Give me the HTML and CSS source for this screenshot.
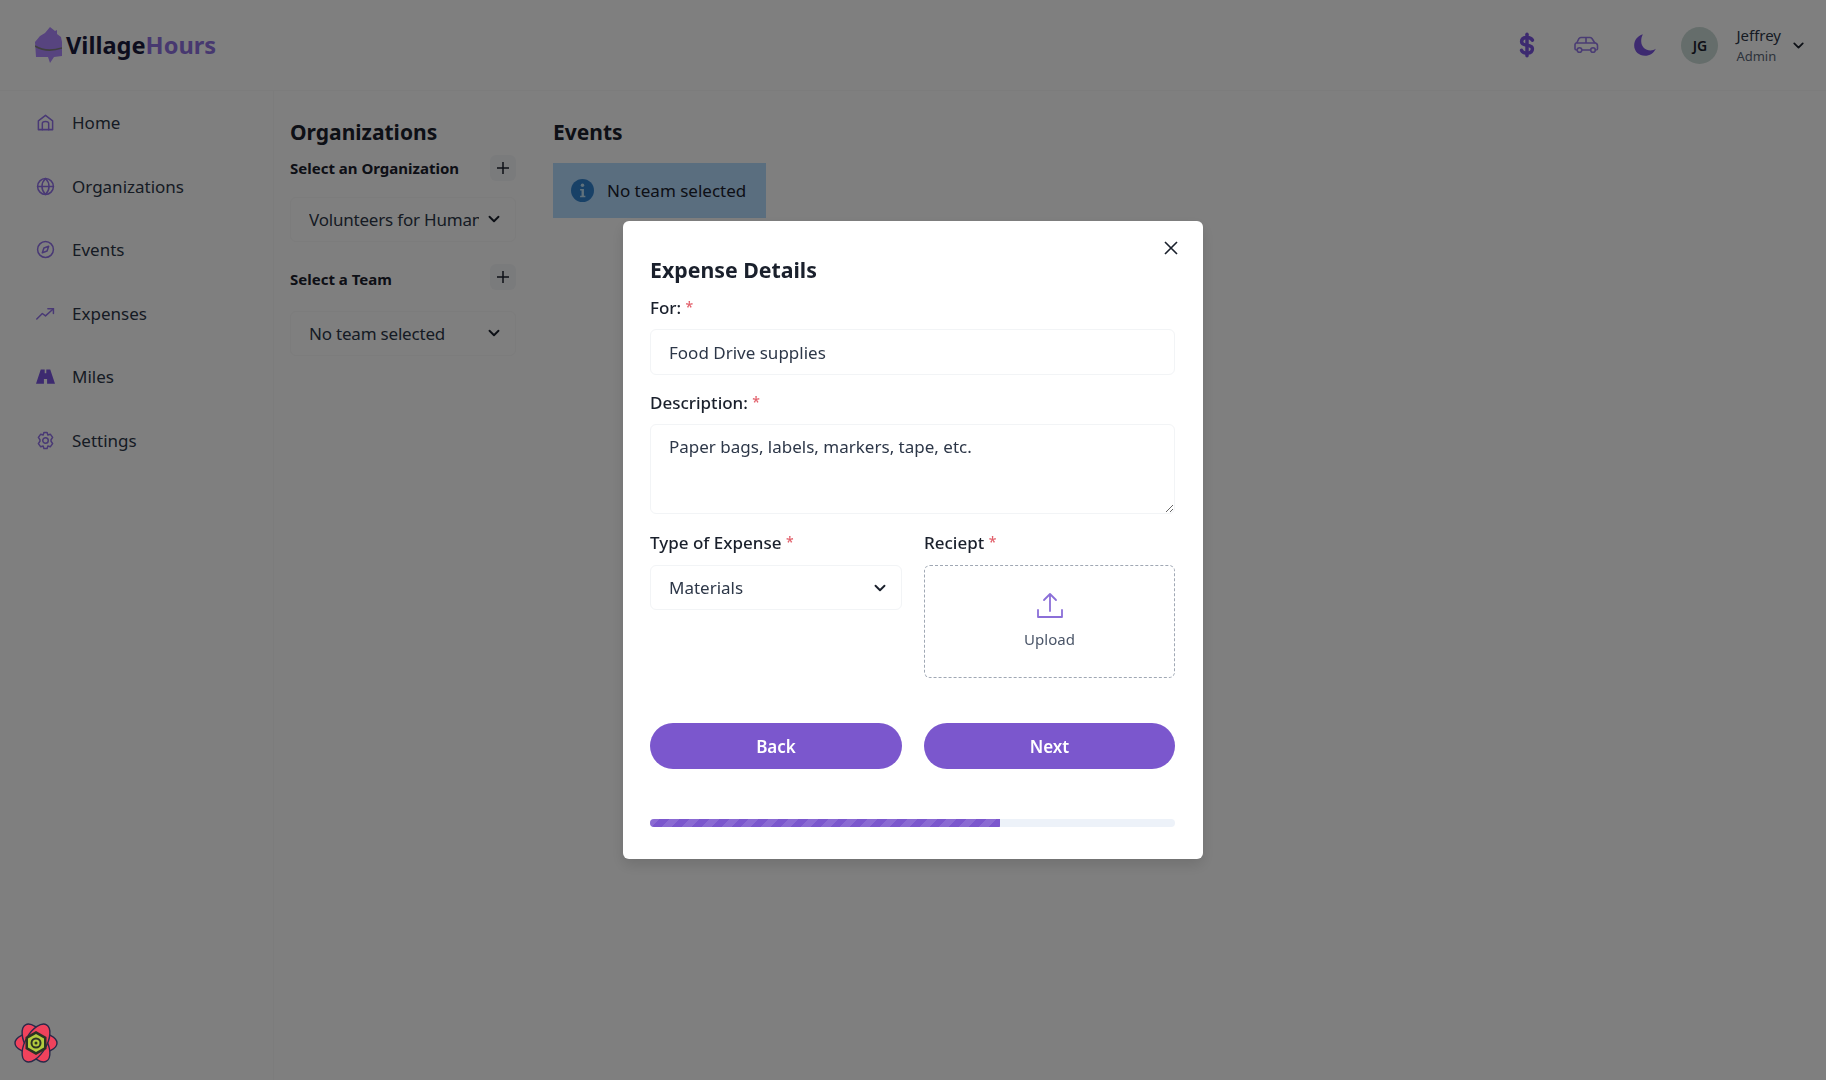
FILE: index.html
```html
<!DOCTYPE html>
<html lang="en">
<head>
    <meta charset="UTF-8">
    <meta name="viewport" content="width=device-width, initial-scale=1.0">
    <title>VillageHours</title>
    <link rel="stylesheet" href="styles.css">
</head>
<body>

    <header class="topbar">
        <div class="brand">
            <svg class="brand-mark" viewBox="0 0 27 36">
                <path d="M0 15 L5 9 L10 6 L15 0 L20 4 L22 3 L22 7 L26 10 L27 15 L27 29 L19 30 L15 36 L13 30 L1 30 Z" fill="#ae88ff"/>
                <path d="M0 19 C8 24 18 24 27 21" fill="none" stroke="#808080" stroke-width="1.600"/>
            </svg>
            <span class="brand-name">Village<span class="brand-accent">Hours</span></span>
        </div>
        <div class="topbar-right">
            <svg class="top-icon" viewBox="0 0 24 24" fill="none" stroke="#7a55e0" stroke-width="3.200" stroke-linecap="round">
                <path d="M17 7.500C16 5.500 14 5 12 5C9 5 7 6.500 7 9C7 14 17 10.500 17 15.500C17 18 15 19.500 12 19.500C10 19.500 8 19 7 17"/>
                <path d="M12 2V22"/>
            </svg>
            <svg class="top-icon" viewBox="0 0 26 24" fill="none" stroke="#9478e8" stroke-width="1.600">
                <path d="M2 16V11.500C2 10.500 3 10 4 9.500L6 5.500C6.500 5 7 4.500 8 4.500H17C18 4.500 18.500 5 19 5.500L21.500 9.500C23 10 24.500 11 24.500 12.500V16C24.500 17 24 17 22.500 17M17.500 17H9M4 17C3 17 2 17 2 16"/>
                <path d="M4 10H22M13 5V10"/>
                <circle cx="6.500" cy="17" r="2.300"/>
                <circle cx="20" cy="17" r="2.300"/>
            </svg>
            <svg class="top-icon top-icon-last" viewBox="0 0 24 24">
                <path d="M10 2C5 3.500 2 7.500 2 12.500C2 18 6.500 22 12 22C16.500 22 20 19.500 22 15.500C20.500 16.500 19 17 17 17C12.500 17 8.500 13.500 8.500 8.500C8.500 6 9 4 10 2Z" fill="#7a55e0"/>
            </svg>
            <div class="avatar">JG</div>
            <div class="user">
                <div class="user-name">Jeffrey</div>
                <div class="user-role">Admin</div>
            </div>
            <svg class="chevron user-chevron" viewBox="0 0 24 24"><path d="M6 9l6 6 6-6"/></svg>
        </div>
    </header>

    <div class="layout">
        <nav class="sidebar">
            <a class="nav-item">
                <svg class="nav-icon" viewBox="0 0 24 24"><path d="M3 21V10L12 3L21 10V21Z"/><path d="M8 21V13C8 10 16 10 16 13V21"/></svg>
                Home
            </a>
            <a class="nav-item">
                <svg class="nav-icon" viewBox="0 0 24 24"><circle cx="12" cy="12" r="10"/><path d="M2 12H22M12 2C6 8 6 16 12 22M12 2C18 8 18 16 12 22"/></svg>
                Organizations
            </a>
            <a class="nav-item">
                <svg class="nav-icon" viewBox="0 0 24 24"><circle cx="12" cy="12" r="10"/><path d="M16 8L14 14L8 16L10 10Z"/></svg>
                Events
            </a>
            <a class="nav-item">
                <svg class="nav-icon" viewBox="0 0 24 24"><path d="M1 19L8 12L12 15L22 6"/><path d="M15 6H22V12"/></svg>
                Expenses
            </a>
            <a class="nav-item">
                <svg class="nav-icon" viewBox="0 0 24 24"><path class="nav-fill" d="M6 3H11V8H13V3H18L24 21H14V15H10V21H0Z"/></svg>
                Miles
            </a>
            <a class="nav-item">
                <svg class="nav-icon" viewBox="0 0 24 24"><circle cx="12" cy="12" r="3.500"/><path d="M10 2H14L15 5L18 4L21 8L19 11V13L21 16L18 20L15 19L14 22H10L9 19L6 20L3 16L5 13V11L3 8L6 4L9 5Z"/></svg>
                Settings
            </a>
        </nav>

        <main class="content">
            <section class="org-column">
                <h2 class="section-title">Organizations</h2>
                <div class="picker-row">
                    <span class="picker-label">Select an Organization</span>
                    <button class="add-btn"><svg viewBox="0 0 24 24"><path d="M12 4V20M4 12H20"/></svg></button>
                </div>
                <div class="picker-select">
                    <select class="picker-input"><option>Volunteers for Humanity</option></select>
                    <svg class="chevron" viewBox="0 0 24 24"><path d="M6 9l6 6 6-6"/></svg>
                </div>
                <div class="picker-row picker-row-team">
                    <span class="picker-label">Select a Team</span>
                    <button class="add-btn"><svg viewBox="0 0 24 24"><path d="M12 4V20M4 12H20"/></svg></button>
                </div>
                <div class="picker-select">
                    <select class="picker-input"><option>No team selected</option></select>
                    <svg class="chevron" viewBox="0 0 24 24"><path d="M6 9l6 6 6-6"/></svg>
                </div>
            </section>

            <section class="events-column">
                <h2 class="section-title">Events</h2>
                <div class="alert">
                    <svg class="alert-icon" viewBox="0 0 24 24">
                        <circle cx="12" cy="12" r="12" fill="#3182ce"/>
                        <circle cx="12" cy="6.500" r="1.800" fill="#bee3f8"/>
                        <path d="M9.500 10.500H13.500V17.500H15V19H9.500V17.500H11V12H9.500Z" fill="#bee3f8"/>
                    </svg>
                    No team selected
                </div>
            </section>
        </main>
    </div>

    <div class="overlay">
        <div class="modal">
            <button class="modal-close"><svg viewBox="0 0 24 24"><path d="M4 4L20 20M20 4L4 20"/></svg></button>
            <h3 class="modal-title">Expense Details</h3>

            <label class="field-label field-first">For: <span class="req">*</span></label>
            <input class="field-input" type="text" value="Food Drive supplies">

            <label class="field-label">Description: <span class="req">*</span></label>
            <textarea class="field-input field-area">Paper bags, labels, markers, tape, etc.</textarea>

            <div class="two-col">
                <div>
                    <label class="field-label field-tight">Type of Expense <span class="req">*</span></label>
                    <div class="select-wrap">
                        <select class="field-input field-select"><option>Materials</option></select>
                        <svg class="chevron" viewBox="0 0 24 24"><path d="M6 9l6 6 6-6"/></svg>
                    </div>
                </div>
                <div>
                    <label class="field-label field-tight">Reciept <span class="req">*</span></label>
                    <div class="upload">
                        <svg class="upload-icon" viewBox="0 0 28 28"><path d="M14 2V19M8 8L14 2L20 8M2 18V25H26V18"/></svg>
                        <span>Upload</span>
                    </div>
                </div>
            </div>

            <div class="two-col modal-actions">
                <button class="pill-btn">Back</button>
                <button class="pill-btn">Next</button>
            </div>

            <div class="progress"><div class="progress-fill"></div></div>
        </div>
    </div>

    <button class="devtools-btn">
        <svg viewBox="0 0 44 44">
            <g fill="#f0425c" stroke="#2a2a4a" stroke-width="1.400">
                <ellipse cx="22" cy="22" rx="21" ry="10.500"/>
                <ellipse cx="22" cy="22" rx="21" ry="10.500" transform="rotate(60 22 22)"/>
                <ellipse cx="22" cy="22" rx="21" ry="10.500" transform="rotate(120 22 22)"/>
            </g>
            <path d="M22 10L32.500 16V28L22 34L11.500 28V16Z" fill="#2b3324"/>
            <path d="M22 13L30 17.500V26.500L22 31L14 26.500V17.500Z" fill="#b4cc3e"/>
            <circle cx="22" cy="22" r="5.500" fill="#2b3324"/>
            <circle cx="22" cy="22" r="3.500" fill="#b4cc3e"/>
            <circle cx="22" cy="22" r="1.500" fill="#2b3324"/>
        </svg>
    </button>

</body>
</html>
```

FILE: styles.css
```css
* {
    box-sizing: border-box;
}
html, body {
    height: 100%;
}
body {
    margin: 0;
    font-family: "Noto Sans", Arial, sans-serif;
    font-size: 17px;
    color: #2d3748;
    background-color: #fff;
    overflow: hidden;
}
button {
    font-family: inherit;
    border: none;
    cursor: pointer;
}
.chevron {
    width: 18px;
    height: 18px;
    fill: none;
    stroke: #1a202c;
    stroke-width: 2.500;
    stroke-linecap: round;
    stroke-linejoin: round;
}

/* top bar */
.topbar {
    height: 91px;
    display: flex;
    align-items: center;
    justify-content: space-between;
    padding: 0 19px 0 35px;
    border-bottom: 1px solid #f8f8f8;
}
.brand {
    display: flex;
    align-items: center;
    gap: 4px;
}
.brand-mark {
    width: 27px;
    height: 36px;
}
.brand-name {
    font-size: 23.600px;
    font-weight: 700;
    color: #1a1a3c;
}
.brand-accent {
    color: #8f70e0;
}
.topbar-right {
    display: flex;
    align-items: center;
}
.top-icon {
    width: 26px;
    height: 26px;
    margin-right: 33px;
}
.top-icon-last {
    margin-right: 24px;
}
.avatar {
    width: 37px;
    height: 37px;
    border-radius: 50%;
    background-color: #cbdbd6;
    color: #1a202c;
    font-size: 14px;
    font-weight: 600;
    display: flex;
    align-items: center;
    justify-content: center;
    margin-left: -1px;
}
.user {
    margin-left: 18px;
    margin-right: 9px;
}
.user-name {
    font-size: 15px;
    line-height: 22px;
}
.user-role {
    font-size: 13px;
    line-height: 20px;
    color: #5a6677;
}
.user-chevron {
    width: 17px;
    height: 17px;
}

/* sidebar */
.layout {
    display: flex;
    height: calc(100% - 91px);
}
.sidebar {
    width: 274px;
    flex-shrink: 0;
    border-right: 1px solid #f8f8f8;
}
.nav-item {
    height: 63.500px;
    display: flex;
    align-items: center;
    gap: 17px;
    padding-left: 36px;
    font-size: 17px;
}
.nav-icon {
    width: 19px;
    height: 19px;
    fill: none;
    stroke: #9272ea;
    stroke-width: 1.900;
    stroke-linecap: round;
    stroke-linejoin: round;
}
.nav-icon .nav-fill {
    fill: #7a55e0;
    stroke: none;
}

/* main content */
.content {
    flex: 1;
    display: flex;
    gap: 37px;
    padding: 26px 0 0 16px;
}
.org-column {
    width: 226px;
}
.section-title {
    margin: 0;
    font-size: 21px;
    line-height: 30px;
    font-weight: 700;
    color: #1a202c;
}
.picker-row {
    margin-top: 8px;
    height: 26px;
    display: flex;
    align-items: center;
    justify-content: space-between;
}
.picker-row-team {
    margin-top: 22px;
}
.picker-label {
    font-size: 15px;
    font-weight: 700;
    color: #1a202c;
}
.picker-row-team .picker-label {
    padding-top: 3px;
}
.add-btn {
    width: 26px;
    height: 26px;
    padding: 4px;
    border-radius: 6px;
    background-color: #f5f7f9;
}
.add-btn svg {
    display: block;
    fill: none;
    stroke: #1a202c;
    stroke-width: 2;
}
.picker-select {
    position: relative;
    margin-top: 16px;
}
.picker-row-team + .picker-select {
    margin-top: 21px;
}
.picker-select .chevron {
    position: absolute;
    right: 13px;
    top: 13px;
}
.picker-input {
    display: block;
    width: 226px;
    height: 45px;
    padding: 0 36px 0 18px;
    font-family: inherit;
    font-size: 17px;
    letter-spacing: -0.2px;
    color: #2d3748;
    background-color: #fff;
    border: 1px solid #f8f8f8;
    border-radius: 6px;
    appearance: none;
}
.events-column {
    width: 213px;
}
.alert {
    margin-top: 16px;
    height: 55px;
    display: flex;
    align-items: center;
    gap: 13px;
    padding-left: 18px;
    background-color: #b4dcff;
    color: #1a202c;
    font-size: 17px;
}
.alert-icon {
    width: 23px;
    height: 23px;
}

/* expense modal */
.overlay {
    position: fixed;
    inset: 0;
    display: flex;
    align-items: center;
    justify-content: center;
    background-color: rgba(0, 0, 0, 0.5);
}
.modal {
    position: relative;
    width: 580px;
    padding: 34px 28px 32px 27px;
    background-color: #fff;
    border-radius: 6px;
    box-shadow: 0 6px 14px rgba(0, 0, 0, 0.12);
}
.modal-close {
    position: absolute;
    top: 18px;
    right: 23px;
    width: 18px;
    height: 18px;
    padding: 0;
    background: none;
}
.modal-close svg {
    display: block;
    fill: none;
    stroke: #1a202c;
    stroke-width: 2.200;
}
.modal-title {
    margin: 0;
    font-size: 21.300px;
    line-height: 30px;
    font-weight: 700;
    color: #1a202c;
}
.field-label {
    display: block;
    margin-top: 16px;
    font-size: 17px;
    line-height: 24px;
    font-weight: 500;
    color: #1a202c;
}
.field-first {
    margin-top: 11px;
}
.field-tight {
    margin-top: 0;
}
.req {
    color: #e2606b;
    font-size: 14px;
    line-height: 1;
    vertical-align: 2px;
}
.field-input {
    display: block;
    width: 100%;
    height: 46px;
    margin-top: 9px;
    padding: 0 18px;
    font-family: inherit;
    font-size: 17px;
    color: #2d3748;
    background-color: #fff;
    border: 1px solid #f2f4f6;
    border-radius: 6px;
    outline: none;
}
.field-area {
    height: 90px;
    margin-top: 9px;
    padding-top: 10px;
    line-height: 24px;
}
.two-col {
    display: grid;
    grid-template-columns: 252px 251px;
    gap: 22px;
    margin-top: 17px;
}
.select-wrap {
    position: relative;
    margin-top: 10px;
}
.select-wrap .chevron {
    position: absolute;
    right: 13px;
    top: 14px;
}
.field-select {
    margin-top: 0;
    height: 45px;
    appearance: none;
}
.upload {
    height: 113px;
    margin-top: 10px;
    padding-bottom: 3px;
    display: flex;
    flex-direction: column;
    align-items: center;
    justify-content: center;
    gap: 9px;
    border: 1px dashed #a0a8b4;
    border-radius: 6px;
    font-size: 15px;
    color: #4a5568;
}
.upload-icon {
    width: 28px;
    height: 28px;
    fill: none;
    stroke: #8b6fd8;
    stroke-width: 1.800;
    stroke-linecap: round;
    stroke-linejoin: round;
}
.modal-actions {
    margin-top: 45px;
}
.pill-btn {
    height: 46px;
    border-radius: 23px;
    background-color: #7b57cd;
    color: #fff;
    font-size: 17px;
    font-weight: 600;
}
.progress {
    height: 8px;
    margin-top: 50px;
    border-radius: 4px;
    background-color: #edf2f9;
    overflow: hidden;
}
.progress-fill {
    width: 66.6%;
    height: 100%;
    background-color: #7b57cd;
    background-image: repeating-linear-gradient(135deg, rgba(255, 255, 255, 0.12) 0 7px, transparent 7px 14px);
}

/* floating devtools button */
.devtools-btn {
    position: fixed;
    left: 14px;
    bottom: 15px;
    width: 44px;
    height: 44px;
    padding: 0;
    background: none;
}
.devtools-btn svg {
    display: block;
}
```
